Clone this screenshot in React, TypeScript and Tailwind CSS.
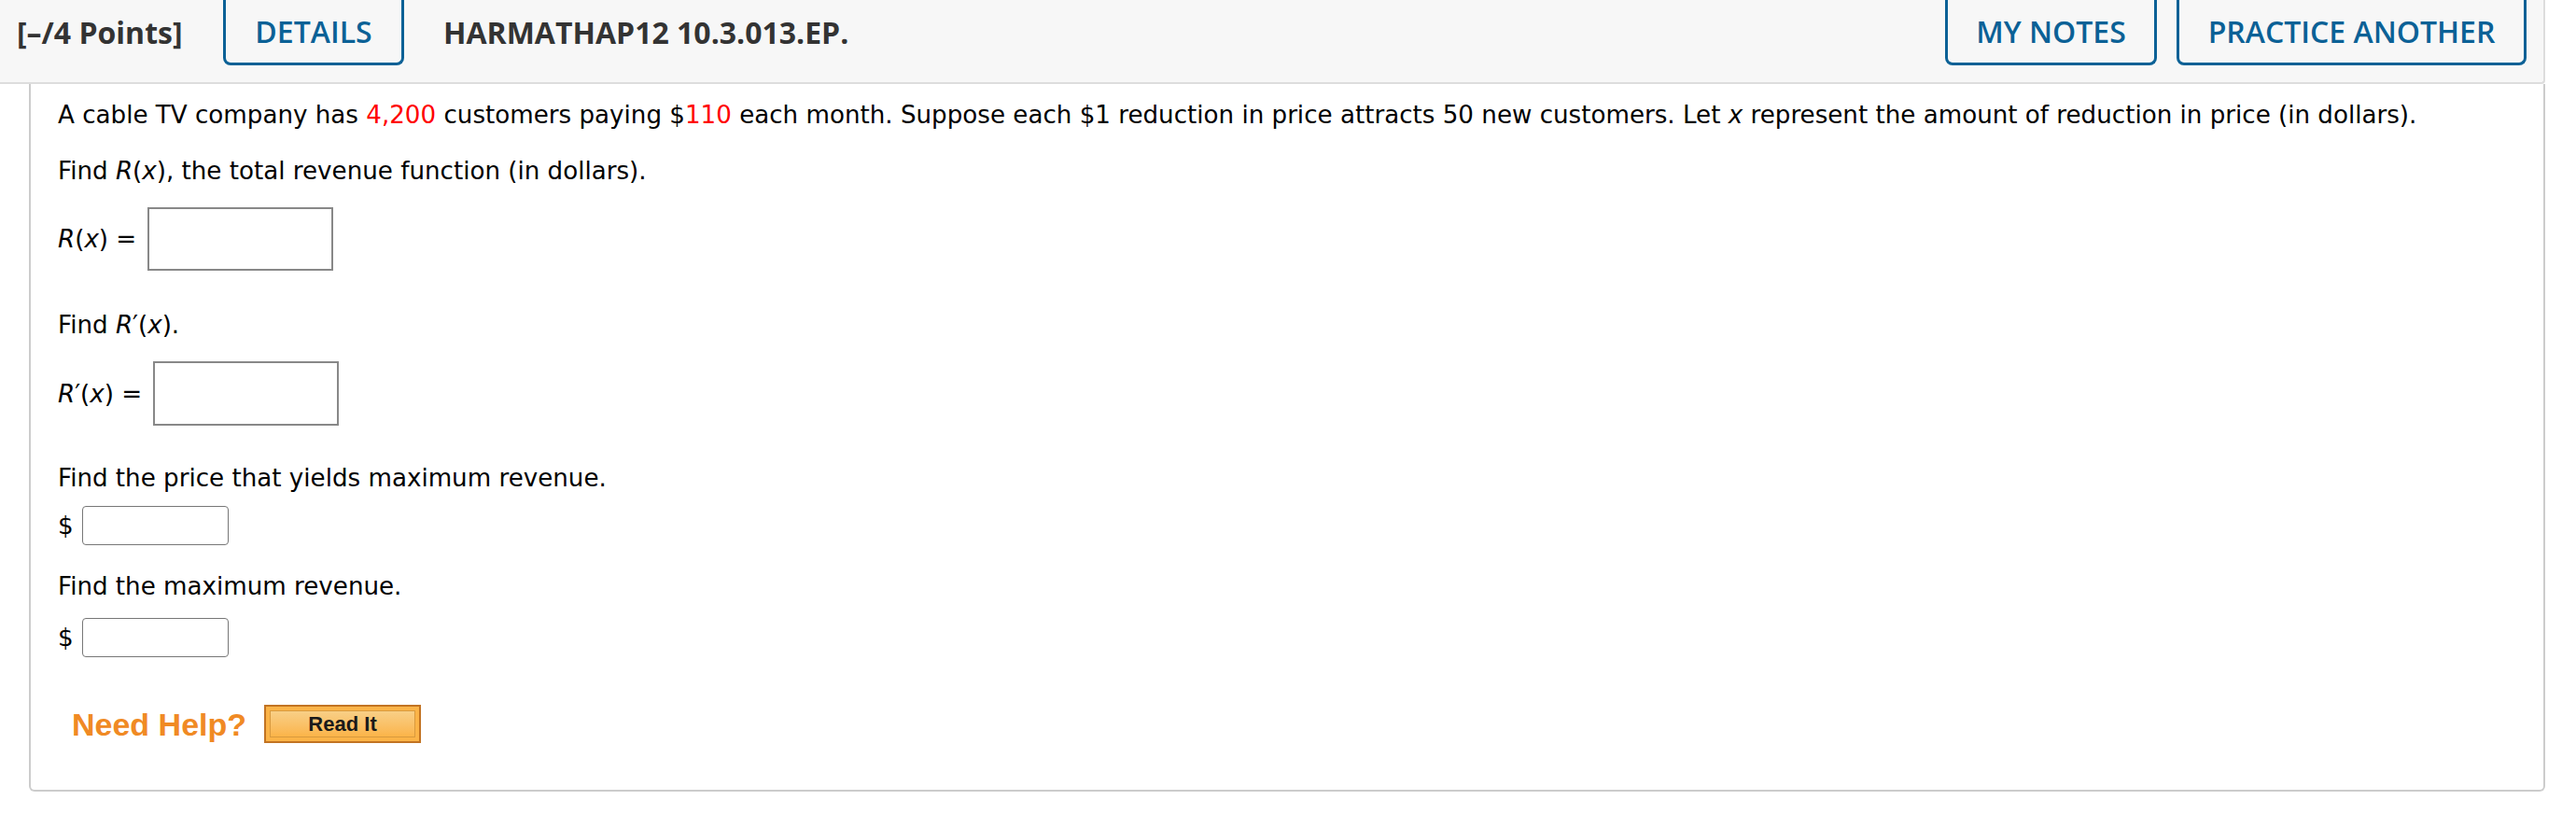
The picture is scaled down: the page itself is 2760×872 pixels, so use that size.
import React from "react";

const blueBtn =
  "h-[70px] flex items-center justify-center border-[3px] border-t-0 border-[#0b6196] rounded-b-[8px] text-[#0b6196] bg-[#f7f7f7]";

function I({ children }: { children: React.ReactNode }) {
  return <span className="italic">{children}</span>;
}

export default function App() {
  return (
    <div className="w-[2760px] h-[872px] bg-white overflow-hidden">
      <div className="w-[2727px]">
        {/* Header */}
        <div
          className="h-[90px] bg-[#f7f7f7] border-b-2 border-r-2 border-[#dddddd] flex items-start rounded-br-[4px]"
          style={{ fontFamily: '"Open Sans", sans-serif' }}
        >
          <div className="h-[70px] flex items-center pl-[18px] w-[239px] text-[32px] font-bold text-[#333333]">
            [–/4 Points]
          </div>
          <div className={blueBtn + " w-[194px] text-[32px] font-semibold"}>DETAILS</div>
          <div className="h-[70px] flex items-center pl-[42px] text-[32px] font-bold text-[#333333]">
            HARMATHAP12 10.3.013.EP.
          </div>
          <div className="flex-1" />
          <div className={blueBtn + " w-[227px] text-[32px] font-semibold"}>MY NOTES</div>
          <div className={blueBtn + " w-[375px] ml-[21px] mr-[18px] text-[32px] font-semibold"}>
            PRACTICE ANOTHER
          </div>
        </div>

        {/* Body */}
        <div
          className="ml-[31px] h-[758px] border-l-2 border-r-2 border-b-2 border-[#cccccc] rounded-b-[6px] pl-[29px] pt-[15px] text-[26.15px] leading-[36px] text-black"
          style={{ fontFamily: '"DejaVu Sans", Verdana, sans-serif' }}
        >
          <p>
            A cable TV company has <span className="text-[#ff0000]">4,200</span> customers paying $
            <span className="text-[#ff0000]">110</span> each month. Suppose each $1 reduction in price attracts 50 new
            customers. Let <I>x</I> represent the amount of reduction in price (in dollars).
          </p>
          <p className="mt-[24px]">
            Find <I>R</I>(<I>x</I>), the total revenue function (in dollars).
          </p>
          <div className="mt-[21px] flex items-center">
            <span>
              <I>R</I>(<I>x</I>) =
            </span>
            <div className="ml-[12px] w-[199px] h-[68px] border-2 border-[#888888] bg-white" />
          </div>
          <p className="mt-[40px]">
            Find <I>R</I>′(<I>x</I>).
          </p>
          <div className="mt-[21px] flex items-center">
            <span>
              <I>R</I>′(<I>x</I>) =
            </span>
            <div className="ml-[12px] w-[199px] h-[69px] border-2 border-[#888888] bg-white" />
          </div>
          <p className="mt-[38px]">Find the price that yields maximum revenue.</p>
          <div className="mt-[12px] flex items-center">
            <span>$</span>
            <div className="ml-[9px] w-[157px] h-[42px] border border-[#777777] rounded-[4px] bg-white" />
          </div>
          <p className="mt-[26px]">Find the maximum revenue.</p>
          <div className="mt-[16px] flex items-center">
            <span>$</span>
            <div className="ml-[9px] w-[157px] h-[42px] border border-[#777777] rounded-[4px] bg-white" />
          </div>
          <div className="mt-[51px] flex items-center pl-[15px]" style={{ fontFamily: '"Liberation Sans", Arial, sans-serif' }}>
            <span className="text-[34px] font-bold text-[#f08a24] leading-none">Need Help?</span>
            <div className="ml-[19px] w-[168px] h-[41px] border-2 border-[#c27322] bg-[#fbb448] p-[4px] flex">
              <div className="flex-1 border border-[#d99a3e] bg-gradient-to-b from-[#f8cf86] to-[#fbb448] flex items-center justify-center text-[22px] font-bold text-[#1a1a1a]">
                Read It
              </div>
            </div>
          </div>
        </div>
      </div>
    </div>
  );
}
